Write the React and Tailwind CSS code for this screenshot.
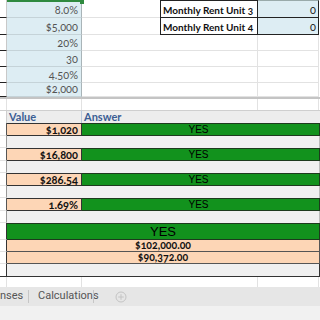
const topRows = [
  { v: "8.0%", label: "Monthly Rent Unit 3", r: "0", h: "h-[18px]" },
  { v: "$5,000", label: "Monthly Rent Unit 4", r: "0", h: "h-[17px]" },
  { v: "20%", h: "h-[16px]" },
  { v: "30", h: "h-[16px]" },
  { v: "4.50%", h: "h-[16px]" },
  { v: "$2,000", h: "h-[16px]", last: true },
];

const checks = ["$1,020", "$16,800", "$286.54", "1.69%"];

const font = "font-['Lato','Liberation_Sans',sans-serif] oldstyle-nums";

const PlusCircle = () => (
  <svg width="12" height="12" viewBox="0 0 12 12" fill="none" stroke="#c4c4c4" strokeWidth="1">
    <circle cx="6" cy="6" r="5" />
    <path d="M6 3.2v5.6M3.2 6h5.6" />
  </svg>
);

const TopRow = ({ row, i }) => (
  <div className={`flex ${row.h} ${row.last ? "border-b-2 border-[#c4c4c4]" : ""}`}>
    <div className="w-[7px] shrink-0 border-b border-r border-b-[#222] border-r-[#c9c9c9]" />
    <div
      className={`relative w-[75px] shrink-0 bg-[#ddedf3] border-r border-b border-r-[#a9b4b8] border-b-[#c5d3d8] flex items-end justify-end pr-[3px] pb-[2px] text-[11px] leading-none text-[#555] ${font} ${
        i === 0 ? "border-t-2 border-t-[#2f8a3f]" : ""
      }`}
    >
      {i === 0 && <div className="absolute right-[-3px] top-[-2px] w-[4px] h-[4px] bg-[#2f8a3f]" />}
      {row.v}
    </div>
    <div className="w-[78px] shrink-0 border-b border-[#e2e2e2]" />
    {row.label ? (
      <>
        <div
          className={`w-[98px] shrink-0 border-l border-r border-b border-[#222] ${
            i === 0 ? "border-t" : ""
          } flex items-end pl-[2px] pb-[2px] whitespace-nowrap overflow-hidden text-[10px] leading-none font-bold text-[#111] ${font}`}
        >
          {row.label}
        </div>
        <div
          className={`w-[61px] shrink-0 bg-[#ddedf3] border-r border-b border-[#222] ${
            i === 0 ? "border-t border-t-[#9aa]" : ""
          } flex items-end justify-end pr-[2px] pb-[2px] text-[11px] leading-none text-[#222] ${font}`}
        >
          {row.r}
        </div>
      </>
    ) : (
      <>
        <div className="w-[98px] shrink-0 border-b border-r border-[#e2e2e2]" />
        <div className="w-[61px] shrink-0 border-b border-r border-[#e2e2e2]" />
      </>
    )}
  </div>
);

export default function App() {
  return (
    <div className="w-[320px] h-[320px] overflow-hidden bg-white flex flex-col">
      {topRows.map((row, i) => (
        <TopRow key={i} row={row} i={i} />
      ))}

      <div className="flex h-[11px]">
        <div className="w-[7px] shrink-0 border-r border-[#e2e2e2]" />
        <div className="w-[75px] shrink-0 border-r border-[#e2e2e2]" />
        <div className="w-[176px] shrink-0 border-r border-[#e2e2e2]" />
        <div className="w-[61px] shrink-0 border-r border-[#e2e2e2]" />
      </div>

      <div className="flex h-[13px]">
        <div className="w-[7px] shrink-0 border-r border-t border-[#cfcfcf]" />
        <div className={`w-[75px] shrink-0 bg-[#ededed] border-t border-r border-t-[#cfcfcf] border-r-[#b9c8dc] pl-[2px] text-[11px] leading-[12px] font-bold text-[#3b5d94] ${font}`}>
          Value
        </div>
        <div className={`flex-1 bg-[#ededed] border-t border-[#cfcfcf] pl-[2px] text-[11px] leading-[12px] font-bold text-[#3b5d94] ${font}`}>
          Answer
        </div>
      </div>

      {checks.map((c, i) => (
        <div key={i} className="flex flex-col">
          <div className="flex h-[13px]">
            <div className="w-[7px] shrink-0 border-r border-b border-r-[#555] border-b-[#e2e2e2]" />
            <div className={`w-[75px] shrink-0 bg-[#fdd6b6] border-y border-r border-[#333] flex items-center justify-end pr-[3px] text-[11px] font-bold leading-none text-[#111] ${font}`}>
              {c}
            </div>
            <div className="flex-1 bg-[#12921d] border-y border-r border-[#1d3a1d] flex items-center justify-center pr-[4px] text-[10px] leading-none text-black font-['Liberation_Sans',sans-serif]">
              YES
            </div>
          </div>
          <div className="flex h-[12px]">
            <div className="w-[7px] shrink-0 border-r border-b border-r-[#999] border-b-[#e2e2e2]" />
            <div className="flex-1 bg-[#f0f0f0] border-r border-[#bbb]" />
          </div>
        </div>
      ))}

      <div className="flex h-[17px]">
        <div className="w-[7px] shrink-0 border-r border-b border-r-[#333] border-b-[#e2e2e2]" />
        <div className="flex-1 bg-[#12921d] border-y border-r border-[#1d3a1d] flex items-center justify-center text-[13px] leading-none text-black font-['Liberation_Sans',sans-serif]">
          YES
        </div>
      </div>
      {["$102,000.00", "$90,372.00"].map((t) => (
        <div key={t} className="flex h-[12px]">
          <div className="w-[7px] shrink-0 border-r border-b border-r-[#333] border-b-[#e2e2e2]" />
          <div className={`flex-1 bg-[#fdd6b6] border-b border-r border-[#555] flex items-center justify-center text-[10.5px] font-bold leading-none text-[#111] ${font}`}>
            {t}
          </div>
        </div>
      ))}
      <div className="flex h-[13px]">
        <div className="w-[7px] shrink-0 border-r border-b border-r-[#333] border-b-[#333]" />
        <div className="flex-1 bg-[#f0f0f0] border-b border-r border-[#333]" />
      </div>

      <div className="flex h-[10px]">
        <div className="w-[7px] shrink-0 border-r border-[#e2e2e2]" />
        <div className="w-[75px] shrink-0 border-r border-[#e2e2e2]" />
        <div className="w-[176px] shrink-0 border-r border-[#e2e2e2]" />
        <div className="w-[61px] shrink-0 border-r border-[#e2e2e2]" />
      </div>

      <div className="flex h-[19px] items-center bg-[#e6e6e6] text-[11px] text-[#555] font-['Roboto','Liberation_Sans',sans-serif]">
        <span className="w-[28px] shrink-0">nses</span>
        <div className="w-px h-[13px] bg-[#c6c6c6]" />
        <span className="pl-[9px] w-[64px] shrink-0">Calculations</span>
        <div className="w-px h-[13px] bg-[#c6c6c6]" />
        <div className="ml-[21px] flex items-center">
          <PlusCircle />
        </div>
      </div>
      <div className="flex-1 bg-[#f1f1f1]" />
    </div>
  );
}
